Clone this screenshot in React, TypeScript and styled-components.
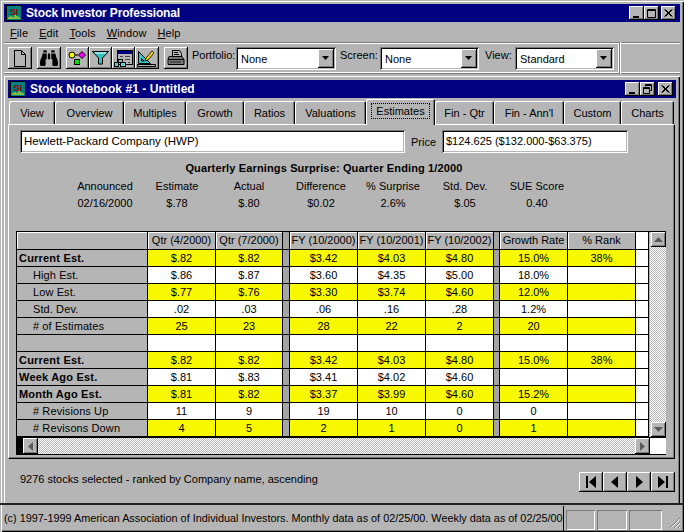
import React from 'react'
import styled, { createGlobalStyle, css } from 'styled-components'
import { FaBinoculars } from 'react-icons/fa'

const FACE = '#b5b5b5'
const SHADE = '#7b7b7b'
const YELLOW = '#f8f800'
const NAVY = '#000080'

const raised = css`
  background: ${FACE};
  box-shadow: inset -1px -1px 0 #000, inset 1px 1px 0 #fff, inset -2px -2px 0 ${SHADE};
`

const sunken = css`
  background: #fff;
  box-shadow: inset 1px 1px 0 ${SHADE}, inset -1px -1px 0 #fff, inset 2px 2px 0 #000, inset -2px -2px 0 ${FACE};
`

const dither = css`
  background: repeating-conic-gradient(#fff 0 25%, ${FACE} 0 50%) 0 0 / 2px 2px;
`

const GlobalStyle = createGlobalStyle`
  html, body { margin: 0; padding: 0; background: ${FACE}; }
  * { box-sizing: border-box; }
  body {
    font-family: "Liberation Sans", Arial, sans-serif;
    font-size: 11px;
    color: #000;
  }
`

const Desktop = styled.div`
  width: 684px;
  height: 532px;
  padding: 4px 4px 0;
  display: flex;
  flex-direction: column;
  background: ${FACE};
  overflow: hidden;
  box-shadow: inset 1px 1px 0 ${FACE}, inset 2px 2px 0 #fff, inset -1px -1px 0 #000, inset -2px -2px 0 ${SHADE};
`

const TitleBar = styled.div<{ $inner?: boolean }>`
  height: 18px;
  flex: none;
  display: flex;
  align-items: center;
  background: ${NAVY};
  color: #fff;
  font-weight: bold;
  font-size: 12px;
  letter-spacing: ${(p) => (p.$inner ? '0.05px' : '-0.15px')};
  padding: 0 ${(p) => (p.$inner ? '3px' : '4px')} 0 2px;
`

const TitleText = styled.span`
  margin-left: 4px;
  flex: 1;
`

const WinButton = styled.div<{ $gap?: number }>`
  ${raised}
  width: 15px;
  height: 14px;
  margin-left: ${(p) => p.$gap ?? 0}px;
  color: #000;
  display: flex;
  align-items: center;
  justify-content: center;
`

const MenuBar = styled.div`
  height: 20px;
  flex: none;
  display: flex;
  align-items: center;
  gap: 11px;
  padding: 1px 0 0 6px;
`

const MenuItem = styled.span`
  letter-spacing: 0.1px;
`

const Accel = styled.span`
  text-decoration: underline;
`

const ToolbarWrap = styled.div`
  height: 34px;
  flex: none;
  display: flex;
`

const Toolbar = styled.div`
  width: 616px;
  height: 32px;
  display: flex;
  align-items: flex-start;
  padding: 4px 0 0 4px;
  border-top: 1px solid ${SHADE};
  border-bottom: 1px solid ${SHADE};
  border-right: 1px solid ${SHADE};
  box-shadow: inset 0 1px 0 #fff, inset 0 -1px 0 #fff, inset -1px 0 0 #fff, 1px 0 0 #fff;
`

const ToolbarRest = styled.div`
  flex: 1;
  height: 32px;
  margin-left: 1px;
  border-top: 1px solid ${SHADE};
  border-bottom: 1px solid ${SHADE};
  box-shadow: inset 0 1px 0 #fff, inset 0 -1px 0 #fff;
`

const ToolButton = styled.div<{ $w?: number; $gap?: number }>`
  ${raised}
  width: ${(p) => p.$w ?? 24}px;
  height: 22px;
  flex: none;
  margin-right: ${(p) => p.$gap ?? 0}px;
  display: flex;
  align-items: center;
  justify-content: center;
`

const ToolLabel = styled.span<{ $gap: number; $w: number }>`
  width: ${(p) => p.$w}px;
  flex: none;
  line-height: 16px;
  margin-left: ${(p) => p.$gap}px;
  white-space: nowrap;
`

const Combo = styled.div<{ $w: number }>`
  ${sunken}
  width: ${(p) => p.$w}px;
  height: 23px;
  flex: none;
  display: flex;
  align-items: center;
  justify-content: space-between;
  padding: 2px 2px 2px 5px;
`

const ComboArrow = styled.div`
  ${raised}
  width: 16px;
  height: 19px;
  display: flex;
  align-items: center;
  justify-content: center;
`

const ChildWindow = styled.div`
  height: 427px;
  flex: none;
  display: flex;
  flex-direction: column;
  padding: 4px 4px 0;
  box-shadow: inset 1px 1px 0 #fff, inset -1px 0 0 #000, inset -2px 0 0 ${SHADE};
`

const TabStrip = styled.div`
  height: 24px;
  margin-top: 2px;
  flex: none;
  display: flex;
  padding-left: 1px;
`

const Tab = styled.div<{ $w: number; $active?: boolean }>`
  width: ${(p) => p.$w}px;
  flex: none;
  position: relative;
  z-index: ${(p) => (p.$active ? 2 : 0)};
  height: ${(p) => (p.$active ? 26 : 23)}px;
  margin-top: ${(p) => (p.$active ? -1 : 1)}px;
  display: flex;
  align-items: center;
  justify-content: center;
  background: ${FACE};
  border-radius: 2px 2px 0 0;
  box-shadow: inset 1px 1px 0 #fff, inset -1px 0 0 #000, inset -2px 0 0 ${SHADE};
`

const FocusLabel = styled.span`
  border: 1px dotted #000;
  padding: 1px 4px;
  margin-top: -3px;
`

const Panel = styled.div`
  height: 335px;
  width: 667px;
  flex: none;
  border-top: 1px solid #fff;
  border-left: 1px solid #fff;
  border-right: 1px solid #000;
  border-bottom: 1px solid #000;
  box-shadow: inset -1px -1px 0 ${SHADE};
  padding-top: 5px;
`

const IdentityRow = styled.div`
  display: flex;
  align-items: center;
  margin-left: 11px;
`

const Field = styled.div<{ $w: number; $size: number }>`
  ${sunken}
  width: ${(p) => p.$w}px;
  height: 23px;
  line-height: 23px;
  padding-left: 4px;
  font-size: ${(p) => p.$size}px;
`

const PriceLabel = styled.span`
  margin: 0 6px;
  width: 25px;
`

const Heading = styled.div`
  width: 608px;
  margin: 8px 0 0 11px;
  text-align: center;
  font-weight: bold;
  line-height: 14px;
  letter-spacing: 0.14px;
`

const Stats = styled.div`
  display: grid;
  grid-template-columns: repeat(7, 72px);
  grid-auto-rows: 17px;
  margin: 3px 0 0 60px;
  text-align: center;
  line-height: 17px;
`

const GridFrame = styled.div`
  width: 650px;
  height: 224px;
  margin: 19px 0 0 7px;
  border: 1px solid #000;
  display: grid;
  grid-template-columns: 633px 16px;
  grid-template-rows: 205px 1fr;
`

const Sheet = styled.div`
  display: grid;
  grid-template-columns: 131px 68px 67px 7px 68px 68px 68px 6px 68px 68px 13px;
  grid-template-rows: 18px repeat(11, 17px);
  line-height: 16px;
`

const Cell = styled.div<{ $tone: 'head' | 'label' | 'white' | 'yellow' | 'sep' }>`
  border-right: 1px solid #000;
  border-bottom: 1px solid #000;
  text-align: center;
  white-space: nowrap;
  overflow: hidden;
  ${(p) => p.$tone === 'white' && `background: #fff;`}
  ${(p) => p.$tone === 'yellow' && `background: ${YELLOW};`}
  ${(p) => p.$tone === 'label' && `background: ${FACE};`}
  ${(p) => p.$tone === 'sep' && `background: #a4a4a4;`}
  ${(p) => p.$tone === 'head' && `background: ${FACE}; box-shadow: inset 1px 1px 0 #fff;`}
`

const RowLabel = styled(Cell)<{ $bold?: boolean }>`
  text-align: left;
  padding-left: ${(p) => (p.$bold ? 2 : 16)}px;
  font-weight: ${(p) => (p.$bold ? 'bold' : 'normal')};
  letter-spacing: ${(p) => (p.$bold ? '0.2px' : '0.1px')};
`

const VScroll = styled.div`
  ${dither}
  display: flex;
  flex-direction: column;
  justify-content: space-between;
`

const HScroll = styled.div`
  ${dither}
  display: flex;
  justify-content: space-between;
  border-top: 1px solid #000;
  padding-left: 6px;
  position: relative;
  &::before {
    content: '';
    position: absolute;
    left: 0;
    top: 0;
    width: 6px;
    height: 100%;
    background: #000;
  }
`

const ScrollCorner = styled.div`
  background: #fff;
  border-top: 1px solid #000;
`

const ScrollButton = styled.div`
  ${raised}
  width: 15px;
  height: 15px;
  margin-left: auto;
  display: flex;
  align-items: center;
  justify-content: center;
`

const HScrollButton = styled(ScrollButton)`
  margin: 0;
  height: 16px;
`

const Footer = styled.div`
  flex: 1;
  display: flex;
  align-items: center;
  justify-content: space-between;
  padding: 0 1px 0 12px;
`

const FooterText = styled.span`
  margin-bottom: 4px;
`

const Nav = styled.div`
  display: flex;
  margin-top: 1px;
`

const NavButton = styled.div`
  ${raised}
  width: 24px;
  height: 20px;
  display: flex;
  align-items: center;
  justify-content: center;
`

const StatusBar = styled.div`
  height: 29px;
  margin: 0 -4px;
  flex: none;
  display: flex;
  align-items: center;
  padding: 2px 3px 2px 4px;
  border-top: 2px solid #222;
`

const StatusText = styled.div`
  width: 560px;
  height: 25px;
  line-height: 25px;
  border-right: 1px solid #000;
  white-space: nowrap;
  overflow: hidden;
  font-size: 10.85px;
`

const StatusPanes = styled.div`
  flex: 1;
  display: flex;
  gap: 2px;
  padding-left: 2px;
  height: 20px;
`

const StatusPane = styled.div<{ $w: number }>`
  width: ${(p) => p.$w}px;
  height: 20px;
  margin-top: 1px;
  box-shadow: inset 1px 1px 0 ${SHADE}, inset -1px -1px 0 #fff;
`

const Grip = styled.div`
  margin-left: auto;
  align-self: flex-end;
  display: flex;
`

const Logo = () => (
  <svg width="16" height="16" viewBox="0 0 16 16">
    <rect width="16" height="16" fill="#000" />
    <rect x="1" y="1" width="14" height="14" fill="#008080" />
    <text x="8" y="9.5" textAnchor="middle" fontFamily="Liberation Sans" fontWeight="bold" fontSize="9.5" fill="#a00000">SI</text>
    <path d="M3 14v-2M5 14v-3M7 14v-2M9 14v-4M11 14v-3M13 14v-2" stroke="#f8f800" />
  </svg>
)

const MinGlyph = () => (
  <svg width="9" height="9"><rect x="1" y="7" width="6" height="2" /></svg>
)

const MaxGlyph = () => (
  <svg width="10" height="9"><path d="M0.5 0.5h8v8h-8zM0.5 1.5h8" fill="none" stroke="#000" /></svg>
)

const RestoreGlyph = () => (
  <svg width="10" height="10">
    <path d="M2.5 2.5v-2h6v6h-2M2.5 1.5h6" fill="none" stroke="#000" />
    <path d="M0.5 3.5h6v6h-6zM0.5 4.5h6" fill="none" stroke="#000" />
  </svg>
)

const CloseGlyph = () => (
  <svg width="9" height="8"><path d="M0.5 0.5l7 7M1.5 0.5l7 7M7.5 0.5l-7 7M8.5 0.5l-7 7" stroke="#000" /></svg>
)

const DownArrow = () => (
  <svg width="8" height="5"><path d="M0 0h7l-3.5 4z" fill="#000" /></svg>
)

const NewIcon = () => (
  <svg width="14" height="17" viewBox="0 0 14 17">
    <path d="M1.5 0.5h7l4 4v12h-11zM8.5 0.5v4h4" fill="none" stroke="#000" />
  </svg>
)

const GroupIcon = () => (
  <svg width="19" height="16" viewBox="0 0 19 16">
    <circle cx="4" cy="5" r="3" fill="#f8f800" stroke="#000" />
    <path d="M14 1.5l3.5 3.5-3.5 3.5-3.5-3.5z" fill="#f800f8" stroke="#000" />
    <path d="M7 5h3" stroke="#000" />
    <rect x="6.5" y="9.5" width="5" height="5" fill="#00e000" stroke="#000" />
  </svg>
)

const FilterIcon = () => (
  <svg width="17" height="14" viewBox="0 0 17 14">
    <path d="M0.5 0.5h16l-6 6.5v6h-4v-6z" fill="#30c0c0" stroke="#000" />
    <path d="M3 2h11" stroke="#fff" />
  </svg>
)

const ReportIcon = () => (
  <svg width="19" height="17" viewBox="0 0 19 17">
    <rect x="3.5" y="0.5" width="15" height="14" fill={FACE} stroke="#000" />
    <rect x="4" y="1" width="14" height="3" fill={NAVY} />
    <path d="M6 6.5h3M11 6.5h5M11 9.5h5M14 12.5h2" stroke="#444" />
    <rect x="4.5" y="9.5" width="4" height="3" fill="#60d0d0" stroke="#000" />
    <rect x="0.5" y="12.5" width="4" height="4" fill="#60d0d0" stroke="#000" />
    <rect x="6.5" y="12.5" width="5" height="4" fill="#60d0d0" stroke="#000" />
  </svg>
)

const DraftIcon = () => (
  <svg width="20" height="18" viewBox="0 0 20 18">
    <path d="M1.5 2.5v12h12z" fill="#30c0c0" stroke="#000" />
    <path d="M4.5 9.5v2.5h2.5z" fill={FACE} stroke="#000" />
    <path d="M0.5 15.5h18v2h-18z" fill={FACE} stroke="#000" />
    <path d="M9 9l6-7 2 2-6 7-3 1z" fill="#f8d000" stroke="#000" strokeWidth="0.8" />
  </svg>
)

const PrinterIcon = () => (
  <svg width="18" height="16" viewBox="0 0 18 16">
    <path d="M5.5 0.5h7l2 3v3h-9z" fill={FACE} stroke="#000" />
    <path d="M7 2.5h4M7 4.5h5" stroke="#000" />
    <path d="M2 6.5h13l2 3v5h-16v-5z" fill="#777" stroke="#000" />
    <path d="M1 9.5h16" stroke="#000" />
    <path d="M3 12h11" stroke="#222" />
  </svg>
)

const ScrollArrow = ({ dir }: { dir: 'up' | 'down' | 'left' | 'right' }) => {
  const paths = { up: 'M0 5h9L4.5 0z', down: 'M0 0h9L4.5 5z', left: 'M5 0v9L0 4.5z', right: 'M0 0v9l5-4.5z' }
  const wide = dir === 'up' || dir === 'down'
  return (
    <svg width={wide ? 9 : 5} height={wide ? 5 : 9}>
      <path d={paths[dir]} fill="#5a5a5a" />
    </svg>
  )
}

const NavIcon = ({ d }: { d: string }) => (
  <svg width="14" height="14" viewBox="0 0 14 14"><path d={d} fill="#000" /></svg>
)

const tabs: [string, number][] = [
  ['View', 46], ['Overview', 69], ['Multiples', 62], ['Growth', 58], ['Ratios', 51], ['Valuations', 71],
  ['Estimates', 69], ['Fin - Qtr', 59], ["Fin - Ann'l", 70], ['Custom', 57], ['Charts', 53],
]

const stats = [
  ['Announced', '02/16/2000'], ['Estimate', '$.78'], ['Actual', '$.80'], ['Difference', '$0.02'],
  ['% Surprise', '2.6%'], ['Std. Dev.', '$.05'], ['SUE Score', '0.40'],
]

const headers = ['Qtr (4/2000)', 'Qtr (7/2000)', null, 'FY (10/2000)', 'FY (10/2001)', 'FY (10/2002)', null, 'Growth Rate', '% Rank']

type Row = { label: string; bold?: boolean; yellow?: boolean; values: string[] }

const rows: Row[] = [
  { label: 'Current Est.', bold: true, yellow: true, values: ['$.82', '$.82', '$3.42', '$4.03', '$4.80', '15.0%', '38%'] },
  { label: 'High Est.', values: ['$.86', '$.87', '$3.60', '$4.35', '$5.00', '18.0%', ''] },
  { label: 'Low Est.', yellow: true, values: ['$.77', '$.76', '$3.30', '$3.74', '$4.60', '12.0%', ''] },
  { label: 'Std. Dev.', values: ['.02', '.03', '.06', '.16', '.28', '1.2%', ''] },
  { label: '# of Estimates', yellow: true, values: ['25', '23', '28', '22', '2', '20', ''] },
  { label: '', values: ['', '', '', '', '', '', ''] },
  { label: 'Current Est.', bold: true, yellow: true, values: ['$.82', '$.82', '$3.42', '$4.03', '$4.80', '15.0%', '38%'] },
  { label: 'Week Ago Est.', bold: true, values: ['$.81', '$.83', '$3.41', '$4.02', '$4.60', '', ''] },
  { label: 'Month Ago Est.', bold: true, yellow: true, values: ['$.81', '$.82', '$3.37', '$3.99', '$4.60', '15.2%', ''] },
  { label: '# Revisions Up', values: ['11', '9', '19', '10', '0', '0', ''] },
  { label: '# Revisons Down', yellow: true, values: ['4', '5', '2', '1', '0', '1', ''] },
]

const SheetRow = ({ row }: { row: Row }) => {
  const tone = row.yellow ? 'yellow' : 'white'
  const v = row.values
  return (
    <>
      <RowLabel $tone="label" $bold={row.bold}>{row.label}</RowLabel>
      <Cell $tone={tone}>{v[0]}</Cell>
      <Cell $tone={tone}>{v[1]}</Cell>
      <Cell $tone="sep" />
      <Cell $tone={tone}>{v[2]}</Cell>
      <Cell $tone={tone}>{v[3]}</Cell>
      <Cell $tone={tone}>{v[4]}</Cell>
      <Cell $tone="sep" />
      <Cell $tone={tone}>{v[5]}</Cell>
      <Cell $tone={tone}>{v[6]}</Cell>
      <Cell $tone="white" />
    </>
  )
}

export default function App() {
  return (
    <Desktop>
      <GlobalStyle />
      <TitleBar>
        <Logo />
        <TitleText>Stock Investor Professional</TitleText>
        <WinButton><MinGlyph /></WinButton>
        <WinButton><MaxGlyph /></WinButton>
        <WinButton $gap={2}><CloseGlyph /></WinButton>
      </TitleBar>
      <MenuBar>
        <MenuItem><Accel>F</Accel>ile</MenuItem>
        <MenuItem><Accel>E</Accel>dit</MenuItem>
        <MenuItem><Accel>T</Accel>ools</MenuItem>
        <MenuItem><Accel>W</Accel>indow</MenuItem>
        <MenuItem><Accel>H</Accel>elp</MenuItem>
      </MenuBar>
      <ToolbarWrap>
        <Toolbar>
          <ToolButton $gap={5}><NewIcon /></ToolButton>
          <ToolButton $gap={5}><FaBinoculars size={18} color="#000" /></ToolButton>
          <ToolButton $w={23}><GroupIcon /></ToolButton>
          <ToolButton $w={23}><FilterIcon /></ToolButton>
          <ToolButton $w={23}><ReportIcon /></ToolButton>
          <ToolButton $w={24} $gap={5}><DraftIcon /></ToolButton>
          <ToolButton><PrinterIcon /></ToolButton>
          <ToolLabel $gap={4} $w={44}>Portfolio:</ToolLabel>
          <Combo $w={100}>None<ComboArrow><DownArrow /></ComboArrow></Combo>
          <ToolLabel $gap={4} $w={40}>Screen:</ToolLabel>
          <Combo $w={99}>None<ComboArrow><DownArrow /></ComboArrow></Combo>
          <ToolLabel $gap={6} $w={30}>View:</ToolLabel>
          <Combo $w={99}>Standard<ComboArrow><DownArrow /></ComboArrow></Combo>
        </Toolbar>
        <ToolbarRest />
      </ToolbarWrap>
      <ChildWindow>
        <TitleBar $inner>
          <Logo />
          <TitleText>Stock Notebook #1 - Untitled</TitleText>
          <WinButton><MinGlyph /></WinButton>
          <WinButton><RestoreGlyph /></WinButton>
          <WinButton $gap={3}><CloseGlyph /></WinButton>
        </TitleBar>
        <TabStrip>
          {tabs.map(([name, w]) =>
            name === 'Estimates' ? (
              <Tab key={name} $w={w} $active><FocusLabel>{name}</FocusLabel></Tab>
            ) : (
              <Tab key={name} $w={w}>{name}</Tab>
            )
          )}
        </TabStrip>
        <Panel>
          <IdentityRow>
            <Field $w={385} $size={11.5}>Hewlett-Packard Company (HWP)</Field>
            <PriceLabel>Price</PriceLabel>
            <Field $w={186} $size={11}>$124.625 ($132.000-$63.375)</Field>
          </IdentityRow>
          <Heading>Quarterly Earnings Surprise: Quarter Ending 1/2000</Heading>
          <Stats>
            {stats.map(([name]) => <span key={name}>{name}</span>)}
            {stats.map(([name, value]) => <span key={name}>{value}</span>)}
          </Stats>
          <GridFrame>
            <Sheet>
              <Cell $tone="head" />
              {headers.map((h, i) => (h ? <Cell key={i} $tone="head">{h}</Cell> : <Cell key={i} $tone="sep" />))}
              <Cell $tone="white" />
              {rows.map((row, i) => <SheetRow key={i} row={row} />)}
            </Sheet>
            <VScroll>
              <ScrollButton><ScrollArrow dir="up" /></ScrollButton>
              <ScrollButton><ScrollArrow dir="down" /></ScrollButton>
            </VScroll>
            <HScroll>
              <HScrollButton><ScrollArrow dir="left" /></HScrollButton>
              <HScrollButton><ScrollArrow dir="right" /></HScrollButton>
            </HScroll>
            <ScrollCorner />
          </GridFrame>
        </Panel>
        <Footer>
          <FooterText>9276 stocks selected - ranked by Company name, ascending</FooterText>
          <Nav>
            <NavButton><NavIcon d="M2 1h2v12H2zM12 1v12L5 7z" /></NavButton>
            <NavButton><NavIcon d="M10 1v12L3 7z" /></NavButton>
            <NavButton><NavIcon d="M4 1v12l7-6z" /></NavButton>
            <NavButton><NavIcon d="M10 1h2v12h-2zM2 1v12l7-6z" /></NavButton>
          </Nav>
        </Footer>
      </ChildWindow>
      <StatusBar>
        <StatusText>(c) 1997-1999 American Association of Individual Investors. Monthly data as of 02/25/00. Weekly data as of 02/25/00</StatusText>
        <StatusPanes>
          <StatusPane $w={29} />
          <StatusPane $w={30} />
          <StatusPane $w={33} />
          <Grip>
            <svg width="12" height="12" viewBox="0 0 12 12">
              <path d="M11 1L1 11M11 5L5 11M11 9L9 11" stroke={SHADE} />
              <path d="M11 2L2 11M11 6L6 11M11 10L10 11" stroke="#fff" />
            </svg>
          </Grip>
        </StatusPanes>
      </StatusBar>
    </Desktop>
  )
}
